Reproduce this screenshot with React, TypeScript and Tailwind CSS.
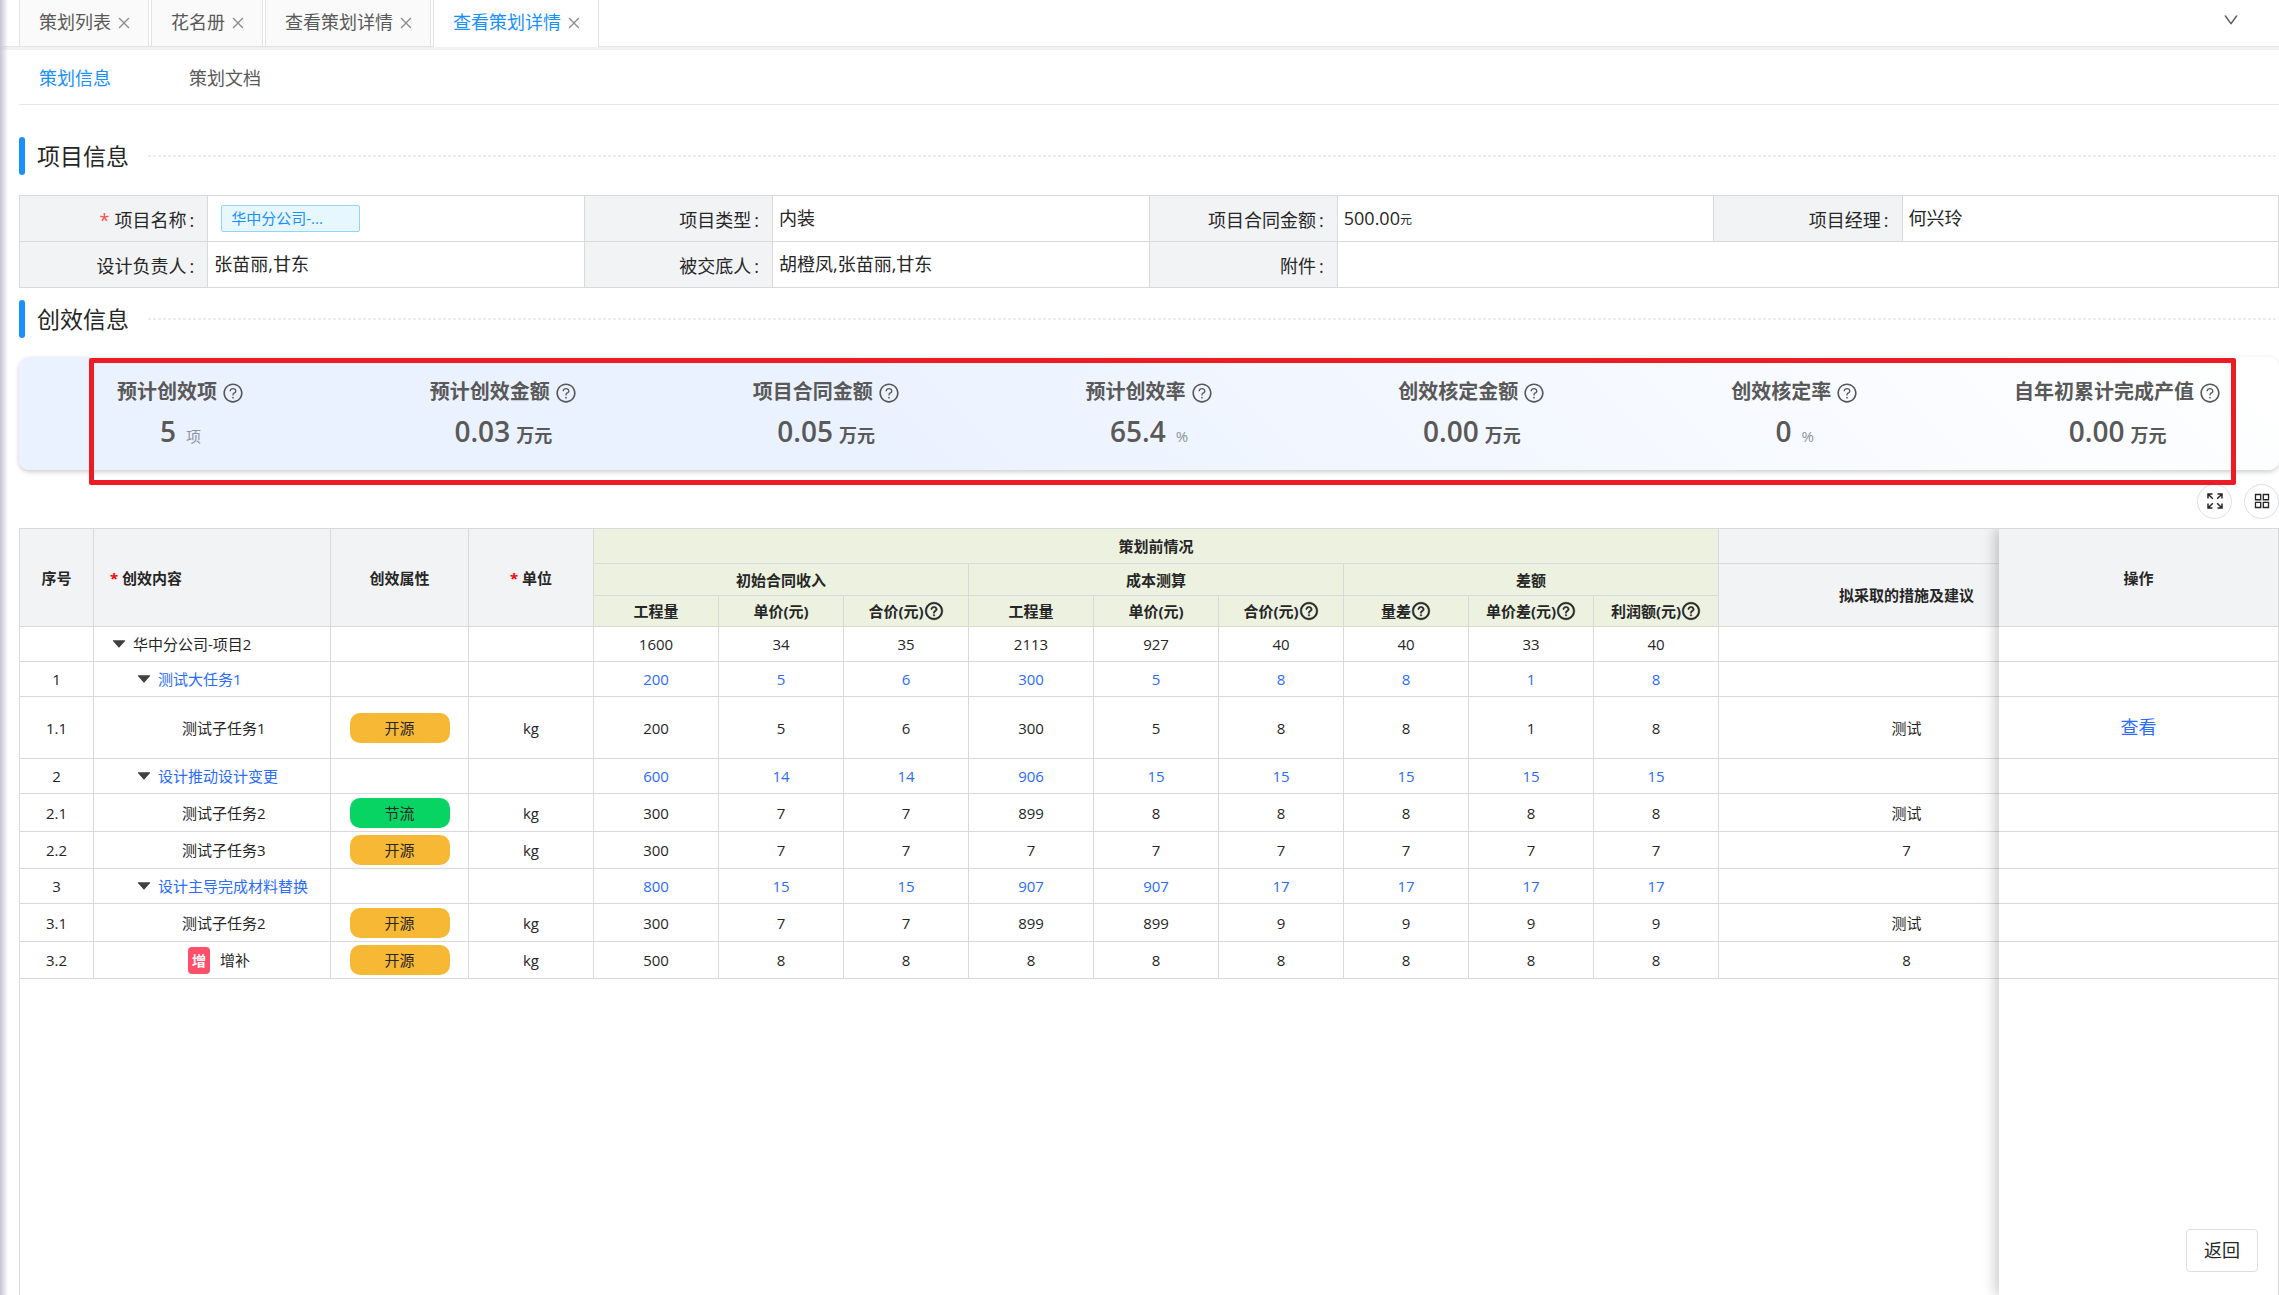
import React, { useState } from 'react';
import { AiFillCaretDown, AiOutlineAppstore, AiOutlineClose, AiOutlineDown, AiOutlineQuestionCircle } from 'react-icons/ai';

const pageTabs = [
  { key: 'list', label: '策划列表' },
  { key: 'roster', label: '花名册' },
  { key: 'detail-1', label: '查看策划详情' },
  { key: 'detail-2', label: '查看策划详情' },
];

const stats = [
  { label: '预计创效项', value: '5', unit: '项', strong: false },
  { label: '预计创效金额', value: '0.03', unit: '万元', strong: true },
  { label: '项目合同金额', value: '0.05', unit: '万元', strong: true },
  { label: '预计创效率', value: '65.4', unit: '%', strong: false },
  { label: '创效核定金额', value: '0.00', unit: '万元', strong: true },
  { label: '创效核定率', value: '0', unit: '%', strong: false },
  { label: '自年初累计完成产值', value: '0.00', unit: '万元', strong: true },
];

type Row = {
  no: string;
  name: string;
  level: number;
  height: string;
  attr?: string;
  unit?: string;
  added?: boolean;
  values: number[];
  measure?: string;
  action?: boolean;
};

const rows: Row[] = [
  { no: '', name: '华中分公司-项目2', level: 0, height: 'h-[35px]', values: [1600, 34, 35, 2113, 927, 40, 40, 33, 40] },
  { no: '1', name: '测试大任务1', level: 1, height: 'h-[35px]', values: [200, 5, 6, 300, 5, 8, 8, 1, 8] },
  { no: '1.1', name: '测试子任务1', level: 2, height: 'h-[62px]', attr: '开源', unit: 'kg', values: [200, 5, 6, 300, 5, 8, 8, 1, 8], measure: '测试', action: true },
  { no: '2', name: '设计推动设计变更', level: 1, height: 'h-[35px]', values: [600, 14, 14, 906, 15, 15, 15, 15, 15] },
  { no: '2.1', name: '测试子任务2', level: 2, height: 'h-[38px]', attr: '节流', unit: 'kg', values: [300, 7, 7, 899, 8, 8, 8, 8, 8], measure: '测试' },
  { no: '2.2', name: '测试子任务3', level: 2, height: 'h-[37px]', attr: '开源', unit: 'kg', values: [300, 7, 7, 7, 7, 7, 7, 7, 7], measure: '7' },
  { no: '3', name: '设计主导完成材料替换', level: 1, height: 'h-[35px]', values: [800, 15, 15, 907, 907, 17, 17, 17, 17] },
  { no: '3.1', name: '测试子任务2', level: 2, height: 'h-[38px]', attr: '开源', unit: 'kg', values: [300, 7, 7, 899, 899, 9, 9, 9, 9], measure: '测试' },
  { no: '3.2', name: '增补', level: 2, height: 'h-[37px]', attr: '开源', unit: 'kg', added: true, values: [500, 8, 8, 8, 8, 8, 8, 8, 8], measure: '8' },
];

const leafHeaders = [
  { label: '工程量', help: false },
  { label: '单价(元)', help: false },
  { label: '合价(元)', help: true },
  { label: '工程量', help: false },
  { label: '单价(元)', help: false },
  { label: '合价(元)', help: true },
  { label: '量差', help: true },
  { label: '单价差(元)', help: true },
  { label: '利润额(元)', help: true },
];

const indent = ['pl-[16px]', 'pl-[41px]', 'pl-[88px]'];

const th = 'border-r border-b border-[#d9d9d9] font-bold p-0';
const thGray = `${th} bg-[#f2f3f5]`;
const thGreen = `${th} bg-[#edf2e0]`;
const td = 'border-r border-b border-[#d9d9d9] p-0 text-center';

const FullscreenIcon = () => (
  <svg viewBox="0 0 16 16" className="size-[16px]" fill="none" stroke="currentColor" strokeWidth="1.5">
    <path d="M1 5.5V1h4.5M1 1l4.8 4.8" />
    <path d="M10.5 1H15v4.5M15 1l-4.8 4.8" />
    <path d="M1 10.5V15h4.5M1 15l4.8-4.8" />
    <path d="M15 10.5V15h-4.5M15 15l-4.8-4.8" />
  </svg>
);

const SectionTitle = ({ children }: { children: React.ReactNode }) => (
  <div className="flex h-[38px] items-center">
    <span className="h-full w-[6px] rounded-[3px] bg-[#1890ff]" />
    <h2 className="ml-[12px] text-[23px] leading-[36px] text-[#262626]">{children}</h2>
    <span className="ml-[19px] h-[2px] flex-1 bg-[repeating-linear-gradient(90deg,#ededed_0_3px,transparent_3px_5px)]" />
  </div>
);

const Field = ({ label, required, wide, children }: { label: string; required?: boolean; wide?: boolean; children?: React.ReactNode }) => (
  <>
    <dt className="flex h-[46px] items-center justify-end border-r border-b border-[#d9d9d9] bg-[#f2f3f5] pt-[4px] pr-[13px]">
      {required && <span className="mr-[5px] text-[#ff4d4f]">*</span>}
      {label}
      <span className="ml-[3px]">:</span>
    </dt>
    <dd className={`${wide ? 'col-span-5' : 'col-span-2'} flex h-[46px] items-center border-r border-b border-[#d9d9d9] pl-[6px]`}>
      {children}
    </dd>
  </>
);

const App = () => {
  const [activeTab, setActiveTab] = useState('detail-2');
  const [section, setSection] = useState('info');

  return (
    <div className="relative flex min-h-screen flex-col bg-white font-['Open_Sans','Noto_Sans_CJK_SC',sans-serif] text-[18px] text-[#262626]">
      {/* Page tabs */}
      <header className="flex h-[50px] items-start border-b-[3px] border-[#f0f0f5]">
        <div className="flex h-[47px] w-full gap-[2px] border-b border-[#e4e4e4] pl-[19px]">
          {pageTabs.map((tab) => (
            <div
              key={tab.key}
              className={`flex items-center gap-[5px] border-x border-[#e4e4e4] pr-[16px] pl-[19px] ${
                activeTab === tab.key ? '-mb-px bg-white pb-px text-[#1890ff]' : 'bg-[#fafafa] text-[#595959]'
              }`}
            >
              <button type="button" className="pb-[2px] leading-[42px]" onClick={() => setActiveTab(tab.key)}>
                {tab.label}
              </button>
              <button type="button" aria-label="关闭" className="text-[#8c8c8c]">
                <AiOutlineClose className="size-[16px]" />
              </button>
            </div>
          ))}
          <button type="button" aria-label="更多" className="mr-[39px] mb-[6px] ml-auto text-[#595959]">
            <AiOutlineDown className="size-[18px]" />
          </button>
        </div>
      </header>

      <div className="pointer-events-none absolute top-0 bottom-0 left-0 w-[8px] bg-linear-to-r from-[#c4c5d0] to-transparent" />

      <main className="flex flex-1 flex-col pl-[19px]">
        <nav className="flex h-[55px] gap-[78px] border-b border-[#e8e8e8] pt-[2px] pl-[20px]">
          <button type="button" className={section === 'info' ? 'text-[#1890ff]' : 'text-[#595959]'} onClick={() => setSection('info')}>
            策划信息
          </button>
          <button type="button" className={section === 'docs' ? 'text-[#1890ff]' : 'text-[#595959]'} onClick={() => setSection('docs')}>
            策划文档
          </button>
        </nav>

        {/* Project info */}
        <section className="mt-[32px]">
          <SectionTitle>项目信息</SectionTitle>
          <dl className="mt-[20px] grid grid-cols-12 border-t border-l border-[#d9d9d9]">
            <Field label="项目名称" required>
              <span className="ml-[7px] h-[27px] w-[139px] rounded-[2px] border border-[#91d5ff] bg-[#e6f7ff] pl-[9px] text-[15px] leading-[25px] text-[#1890ff]">
                华中分公司-...
              </span>
            </Field>
            <Field label="项目类型">内装</Field>
            <Field label="项目合同金额">
              500.00<span className="pt-[3px] text-[12px]">元</span>
            </Field>
            <Field label="项目经理">何兴玲</Field>
            <Field label="设计负责人">张苗丽,甘东</Field>
            <Field label="被交底人">胡橙凤,张苗丽,甘东</Field>
            <Field label="附件" wide />
          </dl>
        </section>

        {/* Benefit info */}
        <section className="mt-[12px] flex flex-1 flex-col">
          <SectionTitle>创效信息</SectionTitle>
          <div className="relative mt-[19px] flex h-[113px] rounded-[10px] bg-linear-45 from-[#ebf2ff] from-38% to-white pt-[20px] text-[#595959] shadow-[0_2px_5px_rgba(0,0,0,0.2)]">
            {stats.map((stat) => (
              <div key={stat.label} className="flex flex-1 flex-col items-center">
                <div className="flex items-center gap-[5px] text-[20px] leading-[30px] font-bold">
                  {stat.label}
                  <AiOutlineQuestionCircle className="mt-[2px] size-[22px]" />
                </div>
                <div className="mt-[4px] flex items-baseline leading-[40px]">
                  <span className="text-[28px] font-semibold">{stat.value}</span>
                  {stat.strong ? (
                    <span className="ml-[6px] text-[18px] font-bold">{stat.unit}</span>
                  ) : (
                    <span className="ml-[10px] text-[15px] text-[#8c939d]">{stat.unit}</span>
                  )}
                </div>
              </div>
            ))}
            <div className="pointer-events-none absolute top-[1px] right-[43px] -bottom-[15px] left-[70px] rounded-[2px] border-[5px] border-[#ed1c24]" />
          </div>

          <div className="mt-[14px] mb-[9px] flex justify-end gap-[12px]">
            <button type="button" aria-label="全屏" className="flex size-[35px] items-center justify-center rounded-full border border-[#dcdfe6] pb-[2px]">
              <FullscreenIcon />
            </button>
            <button type="button" aria-label="列设置" className="flex size-[35px] items-center justify-center rounded-full border border-[#dcdfe6] pb-[2px]">
              <AiOutlineAppstore className="size-[20px]" />
            </button>
          </div>

          <div className="flex flex-1 border-t border-l border-[#d9d9d9] text-[15px] leading-[22px]">
            <div className="flex-1 overflow-hidden">
              <table className="w-[2075px] table-fixed border-separate border-spacing-0">
                <colgroup>
                  <col className="w-[74px]" />
                  <col className="w-[237px]" />
                  <col className="w-[138px]" />
                  <col className="w-[125px]" />
                  {leafHeaders.map((_, i) => (
                    <col key={i} className="w-[125px]" />
                  ))}
                  <col className="w-[376px]" />
                </colgroup>
                <thead>
                  <tr className="h-[35px]">
                    <th rowSpan={3} className={thGray}>序号</th>
                    <th rowSpan={3} className={`${thGray} text-left`}>
                      <span className="ml-[16px] text-[#ff0000]">*</span> 创效内容
                    </th>
                    <th rowSpan={3} className={thGray}>创效属性</th>
                    <th rowSpan={3} className={thGray}>
                      <span className="text-[#ff0000]">*</span> 单位
                    </th>
                    <th colSpan={9} className={thGreen}>策划前情况</th>
                    <th className={thGray} />
                  </tr>
                  <tr className="h-[32px]">
                    <th colSpan={3} className={thGreen}>初始合同收入</th>
                    <th colSpan={3} className={thGreen}>成本测算</th>
                    <th colSpan={3} className={thGreen}>差额</th>
                    <th rowSpan={2} className={thGray}>拟采取的措施及建议</th>
                  </tr>
                  <tr className="h-[31px]">
                    {leafHeaders.map((head, i) => (
                      <th key={i} className={thGreen}>
                        <span className="flex items-center justify-center">
                          {head.label}
                          {head.help && <AiOutlineQuestionCircle className="size-[20px] stroke-[#262626] stroke-[30]" />}
                        </span>
                      </th>
                    ))}
                  </tr>
                </thead>
                <tbody>
                  {rows.map((row, i) => (
                    <tr key={i} className={row.height}>
                      <td className={td}>{row.no}</td>
                      <td className={td}>
                        <div className={`flex items-center ${indent[row.level]} ${row.level === 1 ? 'text-[#2b6cff]' : ''}`}>
                          {row.level < 2 && <AiFillCaretDown className="mr-[5px] size-[18px] text-[#404040]" />}
                          {row.added && (
                            <span className="mr-[10px] ml-[6px] h-[27px] w-[22px] rounded-[4px] bg-[#ff4f6a] text-[14px] leading-[27px] font-bold text-white">
                              增
                            </span>
                          )}
                          {row.name}
                        </div>
                      </td>
                      <td className={td}>
                        {row.attr && (
                          <span
                            className={`mx-auto block h-[30px] w-[100px] rounded-[10px] leading-[30px] ${
                              row.attr === '节流' ? 'bg-[#08d463]' : 'bg-[#f7b935]'
                            }`}
                          >
                            {row.attr}
                          </span>
                        )}
                      </td>
                      <td className={td}>{row.unit}</td>
                      {row.values.map((value, j) => (
                        <td key={j} className={`${td} ${row.level === 1 ? 'text-[#2b6cff]' : ''}`}>
                          {value}
                        </td>
                      ))}
                      <td className={td}>{row.measure}</td>
                    </tr>
                  ))}
                </tbody>
              </table>
            </div>

            {/* Pinned action column */}
            <div className="relative w-[280px] border-r border-[#d9d9d9] bg-white shadow-[-4px_0_12px_rgba(0,0,0,0.2)] [clip-path:inset(0_0_0_-20px)]">
              <table className="w-full table-fixed border-separate border-spacing-0">
                <thead>
                  <tr className="h-[98px]">
                    <th className="border-b border-[#d9d9d9] bg-[#f2f3f5] p-0 font-bold">操作</th>
                  </tr>
                </thead>
                <tbody>
                  {rows.map((row, i) => (
                    <tr key={i} className={row.height}>
                      <td className="border-b border-[#d9d9d9] p-0 text-center">
                        {row.action && (
                          <a href="#view" className="text-[18px] text-[#2b6cff]">
                            查看
                          </a>
                        )}
                      </td>
                    </tr>
                  ))}
                </tbody>
              </table>
            </div>
          </div>
        </section>
      </main>

      <button type="button" className="absolute right-[21px] bottom-[23px] h-[43px] w-[72px] rounded-[4px] border border-[#dcdfe6] bg-white">
        返回
      </button>
    </div>
  );
};

export default App;
